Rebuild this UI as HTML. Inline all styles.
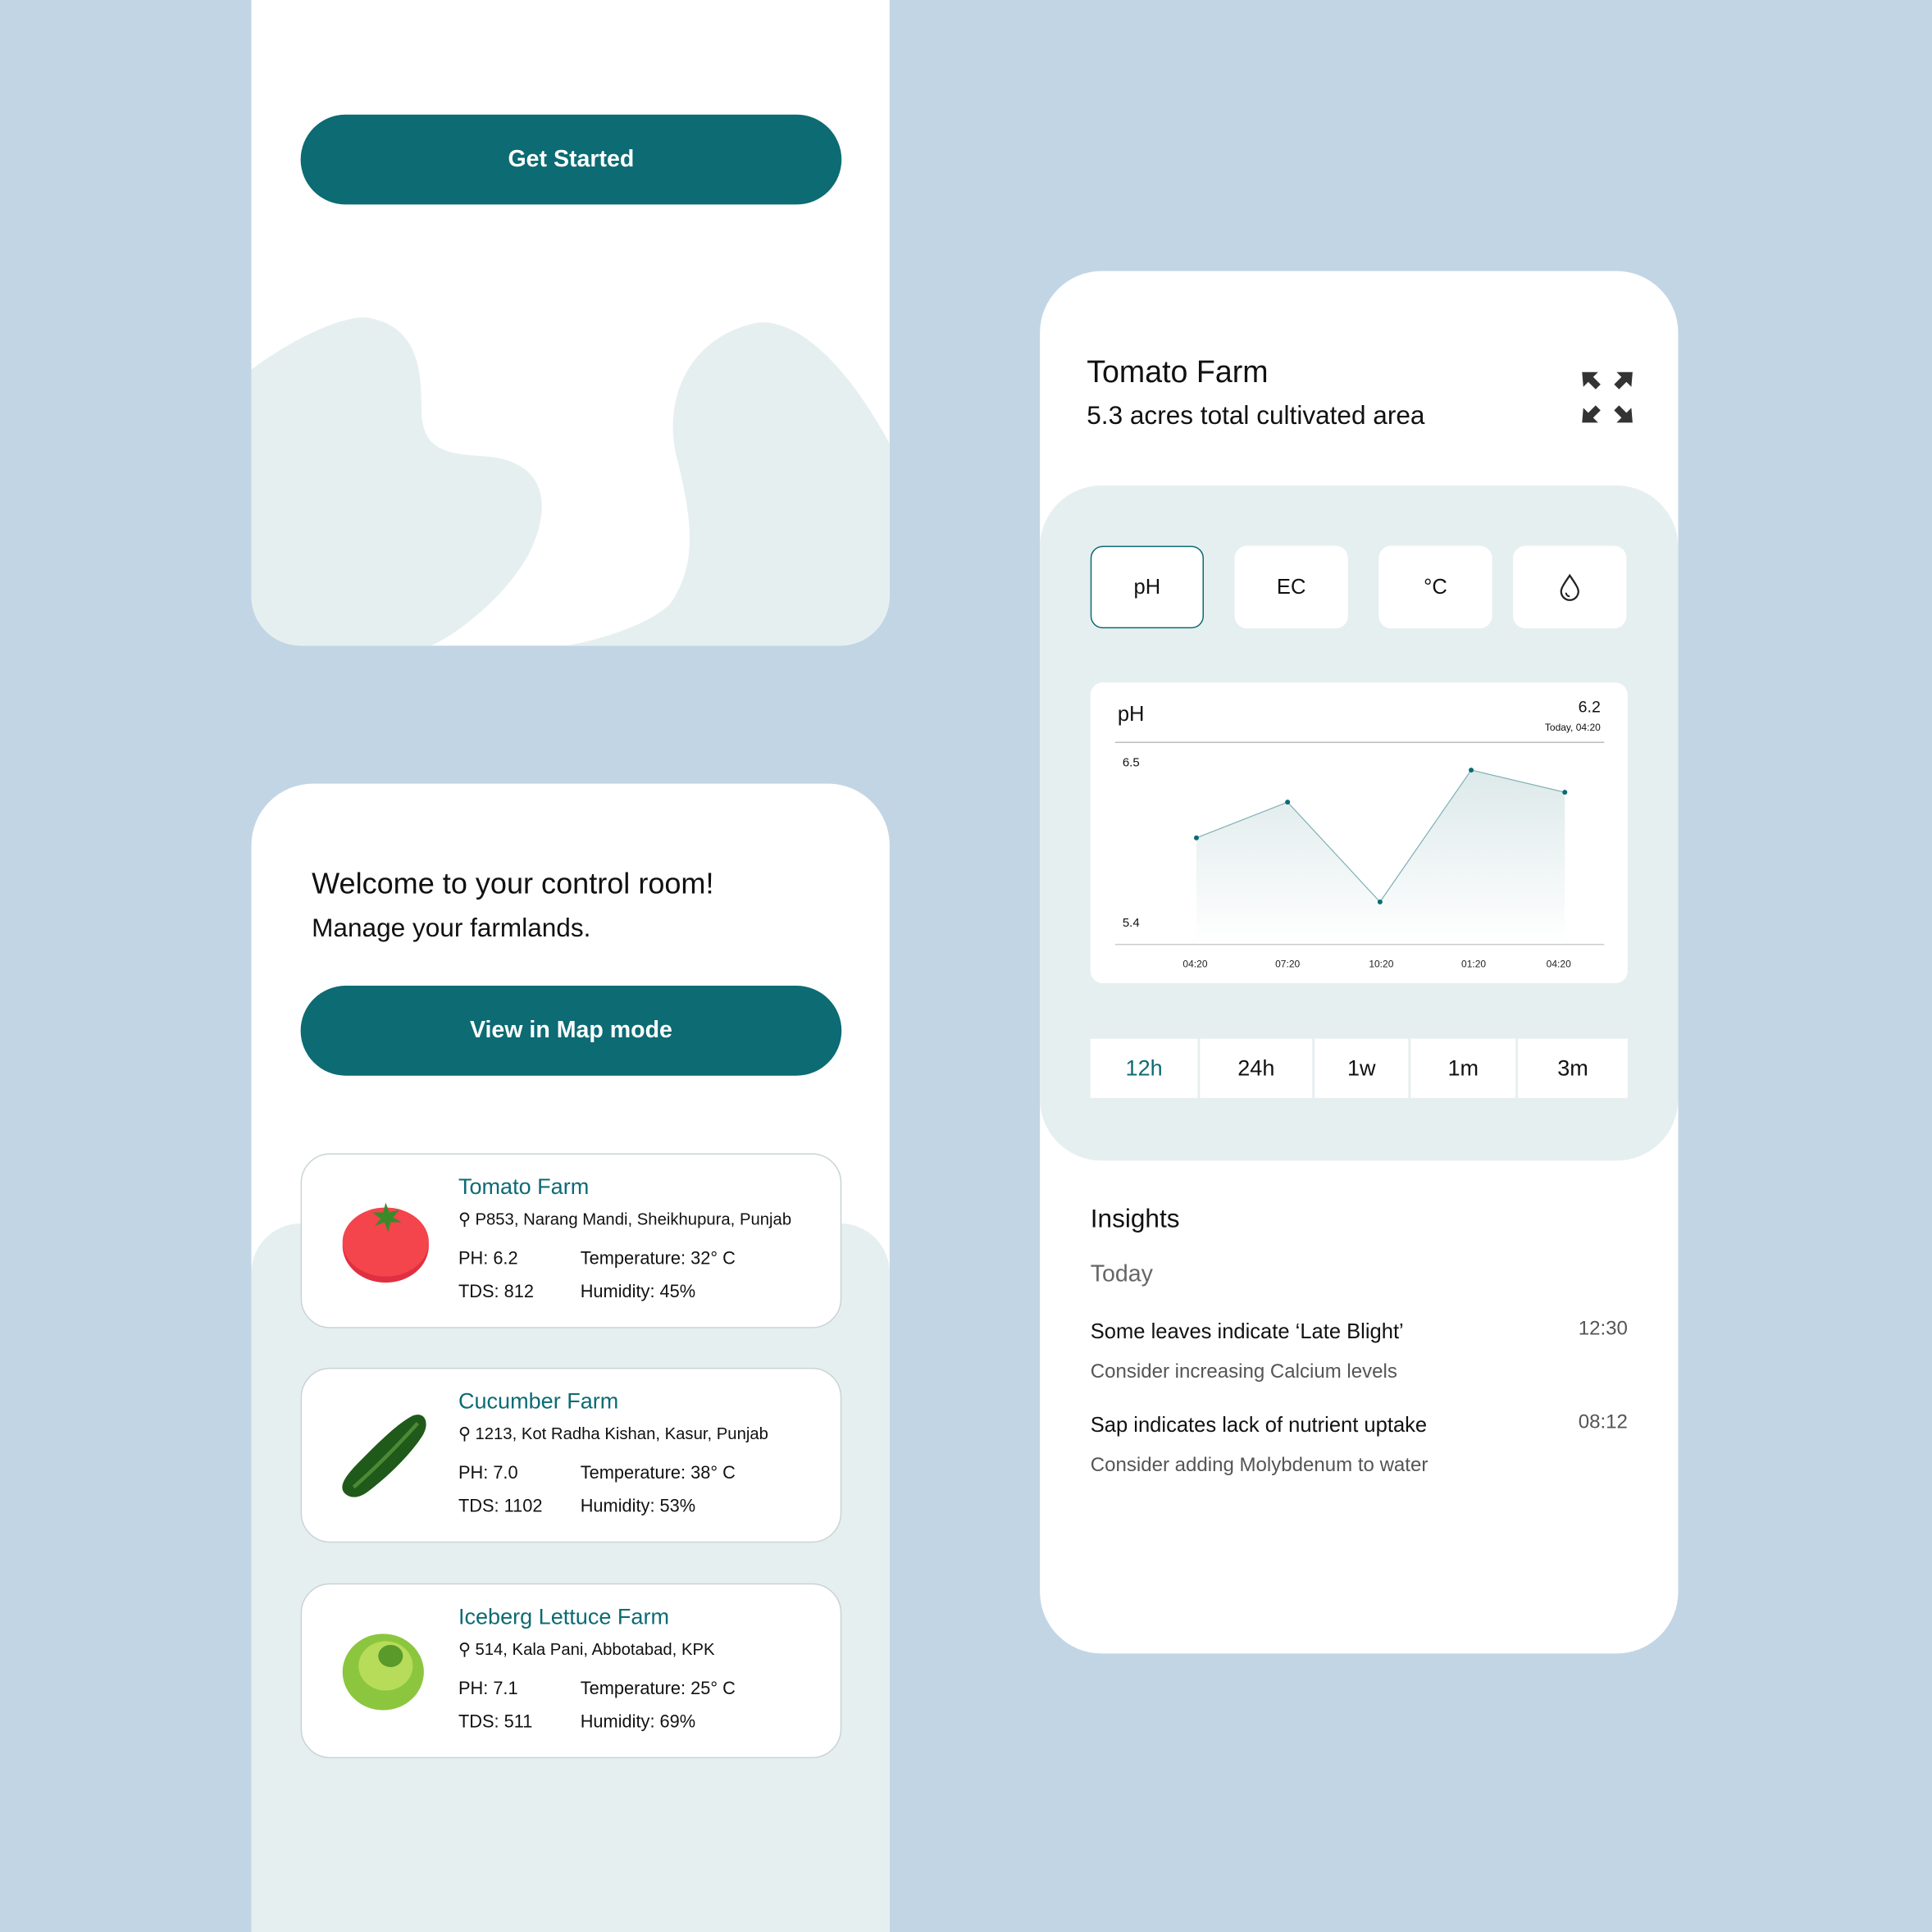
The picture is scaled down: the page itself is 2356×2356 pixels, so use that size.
<!DOCTYPE html>
<html><head><meta charset="utf-8"><style>
*{margin:0;padding:0;box-sizing:border-box}
html,body{width:2356px;height:2356px;overflow:hidden;background:#c2d5e5}
#w{position:absolute;left:0;top:0;width:1568px;height:1568px;overflow:hidden;transform:scale(1.50255);transform-origin:0 0;font-family:"Liberation Sans",sans-serif;color:#111}
.abs{position:absolute}
.card{position:absolute;background:#fff;overflow:hidden}
.btn{position:absolute;left:40px;width:439px;height:73px;border-radius:37px;background:#0c6b73;color:#fff;font-size:19px;font-weight:bold;display:flex;align-items:center;justify-content:center}
.farm{position:absolute;left:40px;width:439px;height:142px;border:1px solid #c9d3d6;border-radius:24px;background:#fff}
.farm .t{position:absolute;left:127px;top:16px;color:#0c6b73;font-size:18px}
.farm .a{position:absolute;left:127px;top:45px;font-size:13.5px}
.farm .s{position:absolute;font-size:14.5px}
.tb{position:absolute;top:443px;width:92px;height:67px;background:#fff;border-radius:10px;display:flex;align-items:center;justify-content:center;font-size:17px}
.tm{position:absolute;top:0;height:48px;background:#fff;display:flex;align-items:center;justify-content:center;font-size:18px}
</style></head><body><div id="w">

<div class="card" style="left:204px;top:0;width:518px;height:524px;border-radius:0 0 40px 40px">
  <div class="btn" style="top:93px">Get Started</div>
  <svg class="abs" style="left:0;top:-40px" width="518" height="564" viewBox="0 0 518 564">
    <path d="M0 340 C40 310 80 295 95 298 C135 305 138 340 138 370 C138 400 150 408 185 410 C240 412 245 450 225 490 C200 535 150 564 145 564 L0 564 Z" fill="#e6eff0"/>
    <path d="M518 400 C480 330 440 298 410 302 C350 315 335 370 345 410 C360 470 360 500 340 530 C320 550 270 562 255 564 L518 564 Z" fill="#e6eff0"/>
  </svg>
</div>

<div class="card" style="left:204px;top:636px;width:518px;height:932px;border-radius:50px 50px 0 0">
  <div class="abs" style="left:0;top:357px;width:518px;height:600px;background:#e6eff0;border-radius:40px 40px 0 0"></div>
  <div class="abs" style="left:49px;top:68px;font-size:24px">Welcome to your control room!</div>
  <div class="abs" style="left:49px;top:106px;font-size:21px">Manage your farmlands.</div>
  <div class="btn" style="top:164px">View in Map mode</div>

  <div class="farm" style="top:300px">
    <svg class="abs" style="left:30px;top:36px" width="76" height="70" viewBox="0 0 76 70"><ellipse cx="38" cy="38" rx="35" ry="30" fill="#e03040"/><ellipse cx="38" cy="35" rx="35" ry="28" fill="#f4444c"/><path d="M38 3 l3 8 8-2 -5 6 7 4 -9 0 -2 8 -3-8 -8 3 5-6 -7-5 9 0z" fill="#3a8a2a"/></svg>
    <div class="t">Tomato Farm</div><div class="a">&#9906; P853, Narang Mandi, Sheikhupura, Punjab</div>
    <div class="s" style="left:127px;top:77px">PH: 6.2</div><div class="s" style="left:226px;top:77px">Temperature: 32° C</div>
    <div class="s" style="left:127px;top:104px">TDS: 812</div><div class="s" style="left:226px;top:104px">Humidity: 45%</div>
  </div>
  <div class="farm" style="top:474px">
    <svg class="abs" style="left:28px;top:34px" width="76" height="74" viewBox="0 0 76 74"><path d="M8 68 C0 62 8 52 20 40 C35 25 50 10 62 4 C72 0 76 10 70 20 C60 36 40 55 25 66 C18 71 12 71 8 68Z" fill="#1f5a1a"/><path d="M14 62 C30 48 50 28 66 10" stroke="#4c8a34" stroke-width="3" fill="none"/></svg>
    <div class="t">Cucumber Farm</div><div class="a">&#9906; 1213, Kot Radha Kishan, Kasur, Punjab</div>
    <div class="s" style="left:127px;top:77px">PH: 7.0</div><div class="s" style="left:226px;top:77px">Temperature: 38° C</div>
    <div class="s" style="left:127px;top:104px">TDS: 1102</div><div class="s" style="left:226px;top:104px">Humidity: 53%</div>
  </div>
  <div class="farm" style="top:649px">
    <svg class="abs" style="left:30px;top:36px" width="72" height="70" viewBox="0 0 72 70"><ellipse cx="36" cy="35" rx="33" ry="31" fill="#8cc63f"/><ellipse cx="38" cy="30" rx="22" ry="20" fill="#b6dc5a"/><ellipse cx="42" cy="22" rx="10" ry="9" fill="#5a9a2a"/></svg>
    <div class="t">Iceberg Lettuce Farm</div><div class="a">&#9906; 514, Kala Pani, Abbotabad, KPK</div>
    <div class="s" style="left:127px;top:77px">PH: 7.1</div><div class="s" style="left:226px;top:77px">Temperature: 25° C</div>
    <div class="s" style="left:127px;top:104px">TDS: 511</div><div class="s" style="left:226px;top:104px">Humidity: 69%</div>
  </div>
</div>

<div class="card" style="left:844px;top:220px;width:518px;height:1122px;border-radius:50px"></div>
<div class="abs" style="left:882px;top:288px;font-size:25px">Tomato Farm</div>
<div class="abs" style="left:882px;top:326px;font-size:21px">5.3 acres total cultivated area</div>
<svg class="abs" style="left:1283px;top:301px" width="43" height="43" viewBox="0 0 43 43" fill="#333">
<path d="M1 1h13l-4 4 6 6-4 4-6-6-4 4z"/><path d="M42 1h-13l4 4-6 6 4 4 6-6 4 4z"/><path d="M1 42h13l-4-4 6-6-4-4-6 6-4-4z"/><path d="M42 42h-13l4-4-6-6 4-4 6 6 4-4z"/></svg>

<div class="abs" style="left:844px;top:394px;width:518px;height:548px;background:#e6eff0;border-radius:50px"></div>
<div class="tb" style="left:885px;border:1.5px solid #0c6b73">pH</div>
<div class="tb" style="left:1002px">EC</div>
<div class="tb" style="left:1119px">°C</div>
<div class="tb" style="left:1228px"><svg width="20" height="24" viewBox="0 0 20 24"><path d="M10 2 C6 8 3 12 3 15 a7 7 0 0 0 14 0 C17 12 14 8 10 2Z" fill="none" stroke="#222" stroke-width="1.5"/><path d="M7 16 a3 3 0 0 0 3 3" fill="none" stroke="#222" stroke-width="1.3"/></svg></div>

<div class="abs" style="left:885px;top:554px;width:436px;height:244px;background:#fff;border-radius:10px">
  <div class="abs" style="left:22px;top:16px;font-size:17px">pH</div>
  <div class="abs" style="right:22px;top:12px;font-size:13px">6.2</div>
  <div class="abs" style="right:22px;top:32px;font-size:8px">Today, 04:20</div>
  <div class="abs" style="left:20px;top:48px;width:397px;height:1px;background:#bbb"></div>
  <div class="abs" style="left:26px;top:60px;font-size:10px">6.5</div>
  <div class="abs" style="left:26px;top:190px;font-size:10px">5.4</div>
  <div class="abs" style="left:20px;top:212px;width:397px;height:1px;background:#ccc"></div>
  <svg class="abs" style="left:0;top:0" width="436" height="244" viewBox="0 0 436 244">
    <defs><linearGradient id="g" x1="0" y1="0" x2="0" y2="1"><stop offset="0" stop-color="#dde9ea"/><stop offset="1" stop-color="#fff"/></linearGradient></defs>
    <path d="M86 126 L160 97 L235 178 L309 71 L385 89 L385 212 L86 212Z" fill="url(#g)"/>
    <path d="M86 126 L160 97 L235 178 L309 71 L385 89" fill="none" stroke="#7fb0b4" stroke-width="0.8"/>
    <g fill="#0c6b73"><circle cx="86" cy="126" r="2"/><circle cx="160" cy="97" r="2"/><circle cx="235" cy="178" r="2"/><circle cx="309" cy="71" r="2"/><circle cx="385" cy="89" r="2"/></g>
    <g font-family="Liberation Sans" font-size="8" fill="#222" text-anchor="middle"><text x="85" y="231">04:20</text><text x="160" y="231">07:20</text><text x="236" y="231">10:20</text><text x="311" y="231">01:20</text><text x="380" y="231">04:20</text></g>
  </svg>
</div>

<div class="abs" style="left:885px;top:843px;width:436px;height:48px">
  <div class="tm" style="left:0;width:87px;color:#0c6b73">12h</div>
  <div class="tm" style="left:89px;width:91px">24h</div>
  <div class="tm" style="left:182px;width:76px">1w</div>
  <div class="tm" style="left:260px;width:85px">1m</div>
  <div class="tm" style="left:347px;width:89px">3m</div>
</div>

<div class="abs" style="left:885px;top:978px;font-size:21px">Insights</div>
<div class="abs" style="left:885px;top:1024px;font-size:19px;color:#666">Today</div>
<div class="abs" style="left:885px;top:1071px;font-size:17px">Some leaves indicate ‘Late Blight’</div>
<div class="abs" style="left:1281px;top:1070px;font-size:16px;color:#555">12:30</div>
<div class="abs" style="left:885px;top:1105px;font-size:16px;color:#555">Consider increasing Calcium levels</div>
<div class="abs" style="left:885px;top:1147px;font-size:17px">Sap indicates lack of nutrient uptake</div>
<div class="abs" style="left:1281px;top:1146px;font-size:16px;color:#555">08:12</div>
<div class="abs" style="left:885px;top:1181px;font-size:16px;color:#555">Consider adding Molybdenum to water</div>

</div></body></html>
